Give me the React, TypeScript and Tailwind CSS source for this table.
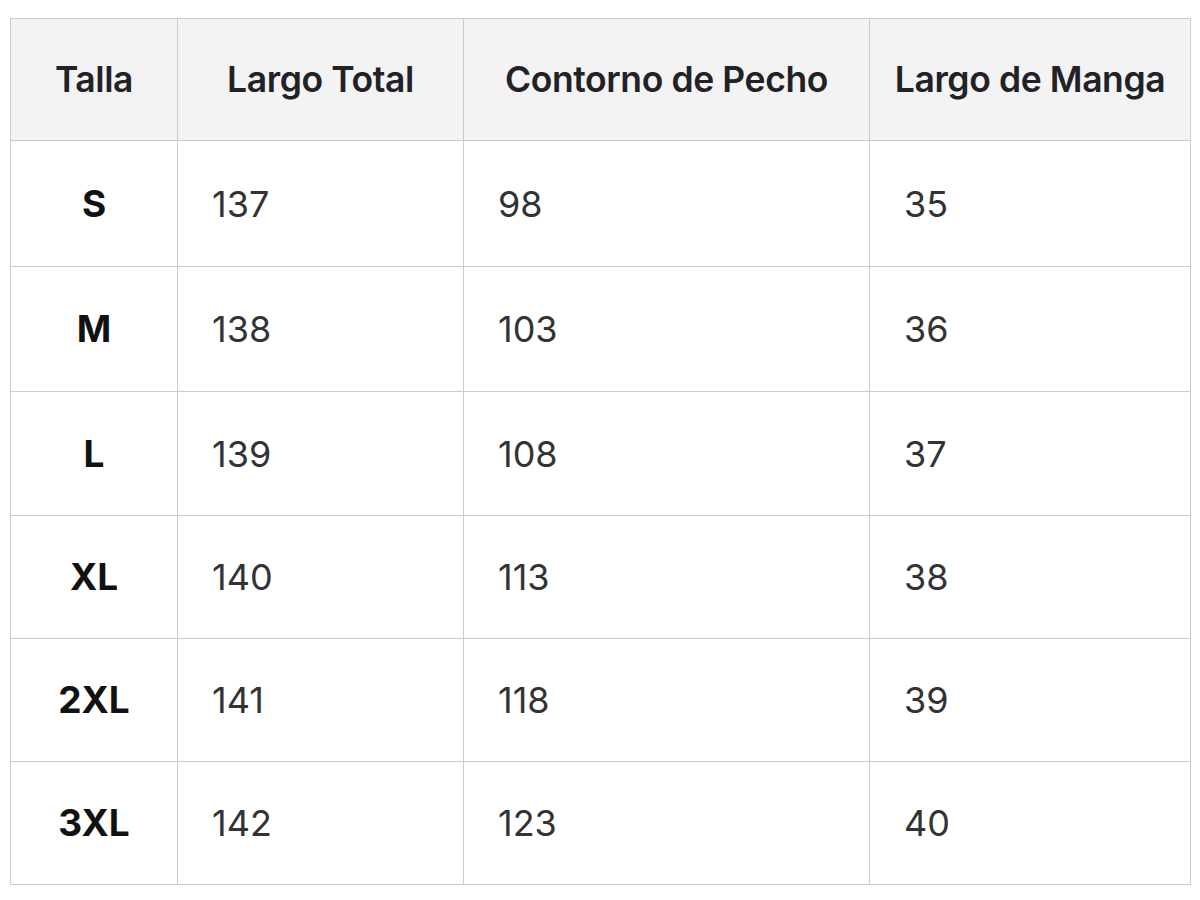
import React from "react";

const rows = [
  ["S", "137", "98", "35"],
  ["M", "138", "103", "36"],
  ["L", "139", "108", "37"],
  ["XL", "140", "113", "38"],
  ["2XL", "141", "118", "39"],
  ["3XL", "142", "123", "40"],
];
const heights = ["h-[126px]", "h-[125px]", "h-[124px]", "h-[123px]", "h-[123px]", "h-[123px]"];

export default function App() {
  return (
    <div
      className="w-[1200px] h-[900px] bg-white pt-[18px] pl-[10px]"
      style={{ fontFamily: "Inter, 'Liberation Sans', sans-serif" }}
    >
      <table className="border-collapse table-fixed w-[1180px] border border-[#cccccc]">
        <colgroup>
          <col className="w-[167px]" />
          <col className="w-[286px]" />
          <col className="w-[406px]" />
          <col className="w-[321px]" />
        </colgroup>
        <thead>
          <tr className="h-[122px] bg-[#f3f3f3]">
            {["Talla", "Largo Total", "Contorno de Pecho", "Largo de Manga"].map((h) => (
              <th
                key={h}
                className="border border-[#cccccc] text-center align-middle text-[35.5px] font-semibold text-[#222226] tracking-[-0.4px] p-0"
              >
                {h}
              </th>
            ))}
          </tr>
        </thead>
        <tbody>
          {rows.map((r, i) => (
            <tr key={r[0]} className={heights[i]}>
              <td className="border border-[#cccccc] text-center align-middle text-[37px] font-bold text-[#111111] p-0">
                {r[0]}
              </td>
              {r.slice(1).map((c, j) => (
                <td
                  key={j}
                  className="border border-[#cccccc] text-left align-middle pl-[34px] text-[36px] font-normal text-[#333336] p-0"
                >
                  {c}
                </td>
              ))}
            </tr>
          ))}
        </tbody>
      </table>
    </div>
  );
}
